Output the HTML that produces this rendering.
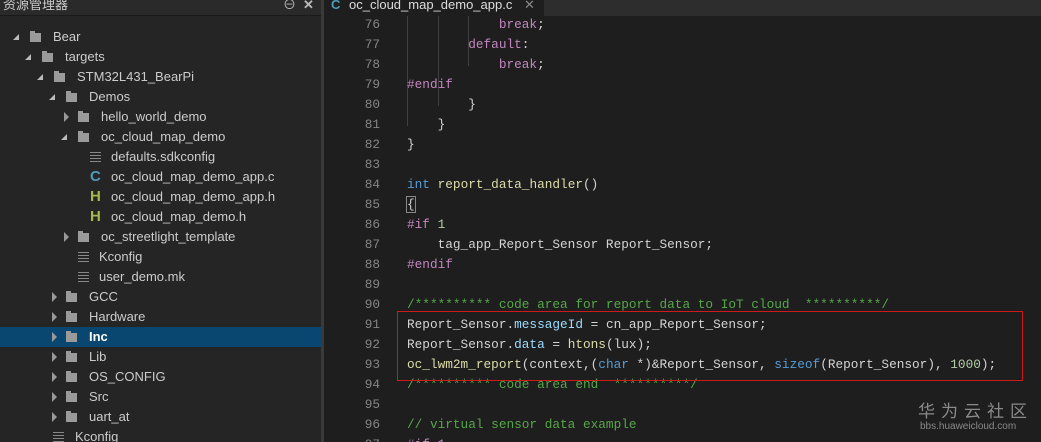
<!DOCTYPE html><html><head><meta charset="utf-8"><style>
*{margin:0;padding:0;box-sizing:border-box}
html{width:1041px;height:442px;overflow:hidden}
body{width:1041px;height:442px;overflow:hidden;background:#1e1e1e;position:relative;font-family:"Liberation Sans","Noto Sans CJK SC",sans-serif}
#side{position:absolute;left:0;top:0;width:321px;height:442px;background:#252526;overflow:hidden}
#sh{position:absolute;left:0;top:0;width:321px;height:16px;background:#2a2a2b;border-bottom:1px solid #1a1a1a;color:#ccc;font-size:13px;line-height:10px;padding-left:3px;overflow:hidden}
#sep{position:absolute;left:321px;top:0;width:3px;height:442px;background:#3a3a3a}
.r{position:absolute;left:0;width:321px;height:20px;color:#ccc;font-size:13px;line-height:20px}
.r span{position:absolute;white-space:nowrap}
.sel{background:#094771;color:#fff;font-weight:bold}
.fd{position:absolute;width:11px;height:9px;top:6px;background:#9a9a9a}
.fd:before{content:"";position:absolute;left:0;top:-2px;width:5px;height:2px;background:#9a9a9a}
.ao{position:absolute;top:7px;width:0;height:0;border-left:6px solid transparent;border-bottom:6px solid #bbb}
.ac{position:absolute;top:5px;width:0;height:0;border-top:5px solid transparent;border-bottom:5px solid transparent;border-left:5px solid #999}
.ln{position:absolute;width:11px;top:5px;height:10px;background:linear-gradient(#888 0 1px,transparent 1px 3px,#888 3px 4px,transparent 4px 6px,#888 6px 7px,transparent 7px 9px,#888 9px 10px)}
#tabbar{position:absolute;left:324px;top:0;right:0;height:16px;background:#2d2d2d}
#tab{position:absolute;left:324px;top:0;width:220px;height:16px;background:#1e1e1e;color:#ddd;font-size:13px;line-height:10px;overflow:hidden}
.c{position:absolute;left:0;right:0;height:20px;font-family:"Liberation Mono",monospace;font-size:12.75px;line-height:20px;color:#d4d4d4;white-space:pre}
.n{position:absolute;left:340px;width:40px;text-align:right;color:#858585}
.t{position:absolute;left:407px}
.k{color:#c586c0}.b{color:#569cd6}.cm{color:#57a64a}.f{color:#dcdcaa}.p{color:#9cdcfe}.nu{color:#b5cea8}
.g{position:absolute;top:16px;width:1px;background:#404040}
#box{position:absolute;left:397px;top:311px;width:626px;height:70px;border:1.5px solid #d01a1a}
</style></head><body>
<div id="side">
<div id="sh">资源管理器<span style="position:absolute;left:283px;top:0;color:#bbb">⊖</span><span style="position:absolute;left:303px;top:0;color:#bbb;font-weight:bold">✕</span></div>
<div class="r" style="top:27px"><i class="ao" style="left:13px"></i><i class="fd" style="left:30px"></i><span style="left:53px">Bear</span></div>
<div class="r" style="top:47px"><i class="ao" style="left:25px"></i><i class="fd" style="left:42px"></i><span style="left:65px">targets</span></div>
<div class="r" style="top:67px"><i class="ao" style="left:37px"></i><i class="fd" style="left:54px"></i><span style="left:77px">STM32L431_BearPi</span></div>
<div class="r" style="top:87px"><i class="ao" style="left:49px"></i><i class="fd" style="left:66px"></i><span style="left:89px">Demos</span></div>
<div class="r" style="top:107px"><i class="ac" style="left:64px"></i><i class="fd" style="left:78px"></i><span style="left:101px">hello_world_demo</span></div>
<div class="r" style="top:127px"><i class="ao" style="left:61px"></i><i class="fd" style="left:78px"></i><span style="left:101px">oc_cloud_map_demo</span></div>
<div class="r" style="top:147px"><i class="ln" style="left:90px"></i><span style="left:111px">defaults.sdkconfig</span></div>
<div class="r" style="top:167px"><span style="left:90px;color:#519aba;font-weight:bold;font-size:15px">C</span><span style="left:111px">oc_cloud_map_demo_app.c</span></div>
<div class="r" style="top:187px"><span style="left:90px;color:#a8b84a;font-weight:bold;font-size:15px">H</span><span style="left:111px">oc_cloud_map_demo_app.h</span></div>
<div class="r" style="top:207px"><span style="left:90px;color:#a8b84a;font-weight:bold;font-size:15px">H</span><span style="left:111px">oc_cloud_map_demo.h</span></div>
<div class="r" style="top:227px"><i class="ac" style="left:64px"></i><i class="fd" style="left:78px"></i><span style="left:101px">oc_streetlight_template</span></div>
<div class="r" style="top:247px"><i class="ln" style="left:78px"></i><span style="left:99px">Kconfig</span></div>
<div class="r" style="top:267px"><i class="ln" style="left:78px"></i><span style="left:99px">user_demo.mk</span></div>
<div class="r" style="top:287px"><i class="ac" style="left:52px"></i><i class="fd" style="left:66px"></i><span style="left:89px">GCC</span></div>
<div class="r" style="top:307px"><i class="ac" style="left:52px"></i><i class="fd" style="left:66px"></i><span style="left:89px">Hardware</span></div>
<div class="r sel" style="top:327px"><i class="ac" style="left:52px"></i><i class="fd" style="left:66px"></i><span style="left:89px">Inc</span></div>
<div class="r" style="top:347px"><i class="ac" style="left:52px"></i><i class="fd" style="left:66px"></i><span style="left:89px">Lib</span></div>
<div class="r" style="top:367px"><i class="ac" style="left:52px"></i><i class="fd" style="left:66px"></i><span style="left:89px">OS_CONFIG</span></div>
<div class="r" style="top:387px"><i class="ac" style="left:52px"></i><i class="fd" style="left:66px"></i><span style="left:89px">Src</span></div>
<div class="r" style="top:407px"><i class="ac" style="left:52px"></i><i class="fd" style="left:66px"></i><span style="left:89px">uart_at</span></div>
<div class="r" style="top:427px"><i class="ln" style="left:53px"></i><span style="left:75px">Kconfig</span></div>
</div>
<div id="sep"></div>
<div id="tabbar"></div>
<div id="tab"><span style="position:absolute;left:7px;top:0;color:#519aba;font-weight:bold">C</span><span style="position:absolute;left:25px;top:0">oc_cloud_map_demo_app.c</span><span style="position:absolute;left:200px;top:0;color:#888">✕</span></div>
<div class="g" style="left:407px;height:110px"></div>
<div class="g" style="left:438px;height:90px"></div>
<div class="g" style="left:468px;height:50px"></div>
<div class="c" style="top:15px"><span class="n">76</span><span class="t">            <span class="k">break</span>;</span></div>
<div class="c" style="top:35px"><span class="n">77</span><span class="t">        <span class="k">default</span>:</span></div>
<div class="c" style="top:55px"><span class="n">78</span><span class="t">            <span class="k">break</span>;</span></div>
<div class="c" style="top:75px"><span class="n">79</span><span class="t"><span class="k">#endif</span></span></div>
<div class="c" style="top:95px"><span class="n">80</span><span class="t">        }</span></div>
<div class="c" style="top:115px"><span class="n">81</span><span class="t">    }</span></div>
<div class="c" style="top:135px"><span class="n">82</span><span class="t">}</span></div>
<div class="c" style="top:155px"><span class="n">83</span></div>
<div class="c" style="top:175px"><span class="n">84</span><span class="t"><span class="b">int</span> <span class="f">report_data_handler</span>()</span></div>
<div class="c" style="top:195px"><span class="n">85</span><span class="t"><span style="outline:1px solid #888">{</span></span></div>
<div class="c" style="top:215px"><span class="n">86</span><span class="t"><span class="k">#if</span> <span class="nu">1</span></span></div>
<div class="c" style="top:235px"><span class="n">87</span><span class="t">    tag_app_Report_Sensor Report_Sensor;</span></div>
<div class="c" style="top:255px"><span class="n">88</span><span class="t"><span class="k">#endif</span></span></div>
<div class="c" style="top:275px"><span class="n">89</span></div>
<div class="c" style="top:295px"><span class="n">90</span><span class="t cm">/********** code area for report data to IoT cloud  **********/</span></div>
<div class="c" style="top:315px"><span class="n">91</span><span class="t">Report_Sensor.<span class="p">messageId</span> = cn_app_Report_Sensor;</span></div>
<div class="c" style="top:335px"><span class="n">92</span><span class="t">Report_Sensor.<span class="p">data</span> = <span class="f">htons</span>(lux);</span></div>
<div class="c" style="top:355px"><span class="n">93</span><span class="t"><span class="f">oc_lwm2m_report</span>(context,(<span class="b">char</span> *)&amp;Report_Sensor, <span class="b">sizeof</span>(Report_Sensor), <span class="nu">1000</span>);</span></div>
<div class="c" style="top:375px"><span class="n">94</span><span class="t cm">/********** code area end  **********/</span></div>
<div class="c" style="top:395px"><span class="n">95</span></div>
<div class="c" style="top:415px"><span class="n">96</span><span class="t cm">// virtual sensor data example</span></div>
<div class="c" style="top:435px"><span class="n">97</span><span class="t k">#if 1</span></div>
<div id="box"></div>
<div style="position:absolute;left:918px;top:400px;color:#8a8a8a;font-size:17px;letter-spacing:6px;line-height:20px;font-family:'Noto Sans CJK SC',sans-serif">华为云社区</div>
<div style="position:absolute;left:920px;top:421px;color:#8a8a8a;font-size:10px;line-height:12px">bbs.huaweicloud.com</div>
</body></html>
